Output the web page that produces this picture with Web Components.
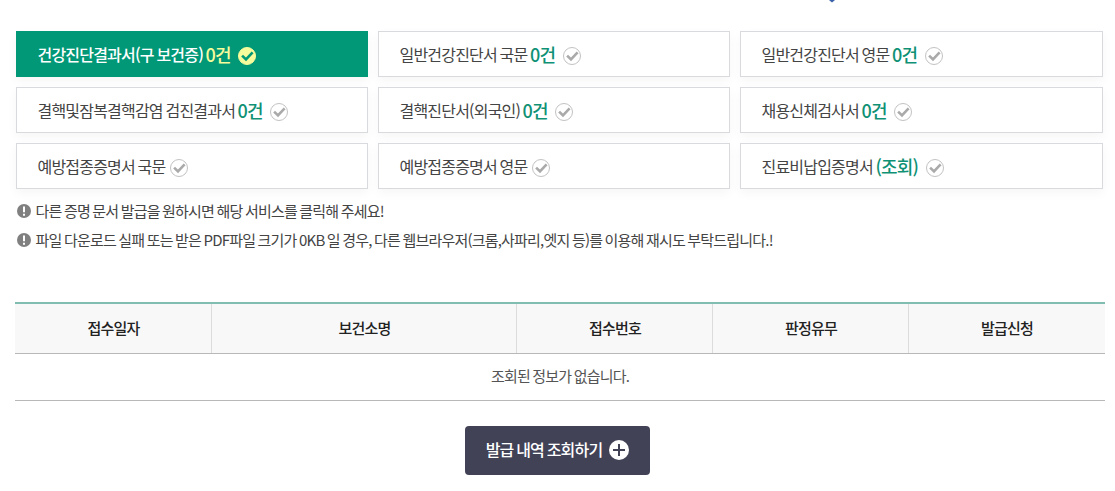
<!DOCTYPE html>
<html lang="ko">
<head>
<meta charset="utf-8">
<title>제증명 발급</title>
<style>
    body {
        margin: 0;
        background: #fff;
        color: #444;
        font-family: "Noto Sans CJK KR", sans-serif;
        font-size: 15px;
        letter-spacing: -0.8px;
        word-spacing: -1px;
    }
</style>
</head>
<body>
<cert-page>
    <cert-card count="0건" active>건강진단결과서(구 보건증)</cert-card>
    <cert-card count="0건">일반건강진단서 국문</cert-card>
    <cert-card count="0건">일반건강진단서 영문</cert-card>
    <cert-card count="0건">결핵및잠복결핵감염 검진결과서</cert-card>
    <cert-card count="0건">결핵진단서(외국인)</cert-card>
    <cert-card count="0건">채용신체검사서</cert-card>
    <cert-card>예방접종증명서 국문</cert-card>
    <cert-card>예방접종증명서 영문</cert-card>
    <cert-card count="(조회)">진료비납입증명서</cert-card>
    <notice-line slot="notice">다른 증명 문서 발급을 원하시면 해당 서비스를 클릭해 주세요!</notice-line>
    <notice-line slot="notice">파일 다운로드 실패 또는 받은 PDF파일 크기가 0KB 일 경우, 다른 웹브라우저(크롬,사파리,엣지 등)를 이용해 재시도 부탁드립니다.!</notice-line>
    <result-table slot="result" columns="접수일자,보건소명,접수번호,판정유무,발급신청">조회된 정보가 없습니다.</result-table>
    <more-button slot="action">발급 내역 조회하기</more-button>
</cert-page>
<script>
    class CertPage extends HTMLElement {
        connectedCallback() {
            this.attachShadow({ mode: 'open' });
            this.shadowRoot.innerHTML = `
                <style>
                    :host {
                        display: block;
                        position: relative;
                        box-sizing: border-box;
                        height: 491px;
                        padding: 31px 10px 0 15px;
                        overflow: hidden;
                    }
                    .pointer {
                        position: absolute;
                        top: 0;
                        left: 829px;
                        display: block;
                    }
                    .cards {
                        display: grid;
                        grid-template-columns: 352px 352px 363px;
                        grid-auto-rows: 46px;
                        gap: 10px;
                        padding-left: 1px;
                    }
                    .notices {
                        display: grid;
                        grid-auto-rows: 29px;
                        margin-top: 7px;
                        padding-left: 2px;
                    }
                    .result {
                        margin-top: 48px;
                    }
                    .action {
                        display: flex;
                        justify-content: center;
                        margin-top: 25px;
                        padding-right: 5px;
                    }
                </style>
                <svg class="pointer" width="6" height="3" viewBox="0 0 6 3"><path d="M0 0h6L3 2.6z" fill="#3a62a8"/></svg>
                <div class="cards"><slot></slot></div>
                <div class="notices"><slot name="notice"></slot></div>
                <div class="result"><slot name="result"></slot></div>
                <div class="action"><slot name="action"></slot></div>
            `;
        }
    }

    class CertCard extends HTMLElement {
        connectedCallback() {
            const count = this.getAttribute('count');
            this.attachShadow({ mode: 'open' });
            this.shadowRoot.innerHTML = `
                <style>
                    :host {
                        --ring: #c2c2c2;
                        --disc: #fff;
                        --tick: #aaa;
                        display: flex;
                        align-items: center;
                        box-sizing: border-box;
                        padding: 0 20.5px;
                        border: 1px solid #d8dadd;
                        background: #fff;
                        box-shadow: 0 4px 10px rgba(0, 0, 0, 0.04);
                        font-size: 16px;
                        line-height: 24px;
                        white-space: nowrap;
                    }
                    :host([active]) {
                        --ring: #f6fb9c;
                        --disc: #f6fb9c;
                        --tick: #009876;
                        border-color: #009876;
                        background: #009876;
                        color: #fff;
                        font-weight: 500;
                    }
                    strong {
                        margin-left: 2.5px;
                        color: #0f9175;
                        font-size: 18px;
                        font-weight: 500;
                        letter-spacing: -0.8px;
                    }
                    :host([active]) strong {
                        color: #f6fb9c;
                    }
                    svg {
                        flex: none;
                        margin: 3px 0 0 5px;
                    }
                    strong + svg {
                        margin-left: 7.5px;
                    }
                </style>
                <span><slot></slot></span>
                ${count ? `<strong>${count}</strong>` : ''}
                <svg width="18" height="18" viewBox="0 0 18 18" fill="none">
                    <circle cx="9" cy="9" r="8.5" fill="var(--disc)" stroke="var(--ring)"/>
                    <path d="M4.1 8.6l3.9 3.9 6.6-7.1" stroke="var(--tick)" stroke-width="2.6"/>
                </svg>
            `;
        }
    }

    class NoticeLine extends HTMLElement {
        connectedCallback() {
            this.attachShadow({ mode: 'open' });
            this.shadowRoot.innerHTML = `
                <style>
                    :host {
                        display: flex;
                        align-items: center;
                        gap: 4.5px;
                        line-height: 29px;
                        white-space: nowrap;
                    }
                    svg {
                        flex: none;
                    }
                </style>
                <svg width="14" height="14" viewBox="0 0 14 14">
                    <circle cx="7" cy="7" r="7" fill="#808080"/>
                    <path d="M7 2.5v5.8M7 9.7v2" stroke="#fff" stroke-width="2"/>
                </svg>
                <span><slot></slot></span>
            `;
        }
    }

    class ResultTable extends HTMLElement {
        connectedCallback() {
            const columns = this.getAttribute('columns').split(',');
            this.attachShadow({ mode: 'open' });
            this.shadowRoot.innerHTML = `
                <style>
                    :host {
                        display: block;
                        border-top: 2px solid #82bdb2;
                    }
                    .head {
                        display: grid;
                        grid-template-columns: 197px 305px 196px 196px 196px;
                        height: 49px;
                        border-bottom: 1px solid #b8b8b8;
                        background: #f8f8f8;
                        color: #222;
                        font-weight: 500;
                        letter-spacing: -0.75px;
                        line-height: 48px;
                        text-align: center;
                    }
                    .head div + div {
                        box-shadow: -1px 0 #dcdcdc;
                    }
                    .empty {
                        height: 46px;
                        border-bottom: 1px solid #b8b8b8;
                        color: #555;
                        line-height: 43px;
                        text-align: center;
                    }
                </style>
                <div class="head">${columns.map(name => `<div>${name}</div>`).join('')}</div>
                <div class="empty"><slot></slot></div>
            `;
        }
    }

    class MoreButton extends HTMLElement {
        connectedCallback() {
            this.attachShadow({ mode: 'open' });
            this.shadowRoot.innerHTML = `
                <style>
                    :host {
                        display: block;
                    }
                    button {
                        display: flex;
                        align-items: center;
                        justify-content: center;
                        gap: 7px;
                        width: 185px;
                        height: 49px;
                        padding: 0 0 2px;
                        border: 0;
                        border-radius: 4px;
                        background: #424257;
                        color: #fff;
                        font: inherit;
                        font-size: 16px;
                        font-weight: 500;
                        letter-spacing: inherit;
                        word-spacing: inherit;
                        cursor: pointer;
                    }
                    span {
                        padding-bottom: 2px;
                    }
                </style>
                <button type="button">
                    <span><slot></slot></span>
                    <svg width="20" height="20" viewBox="0 0 20 20">
                        <circle cx="10" cy="10" r="10" fill="#fff"/>
                        <path d="M10 4v12M4 10h12" stroke="#424257" stroke-width="2"/>
                    </svg>
                </button>
            `;
        }
    }

    customElements.define('cert-page', CertPage);
    customElements.define('cert-card', CertCard);
    customElements.define('notice-line', NoticeLine);
    customElements.define('result-table', ResultTable);
    customElements.define('more-button', MoreButton);
</script>
</body>
</html>
